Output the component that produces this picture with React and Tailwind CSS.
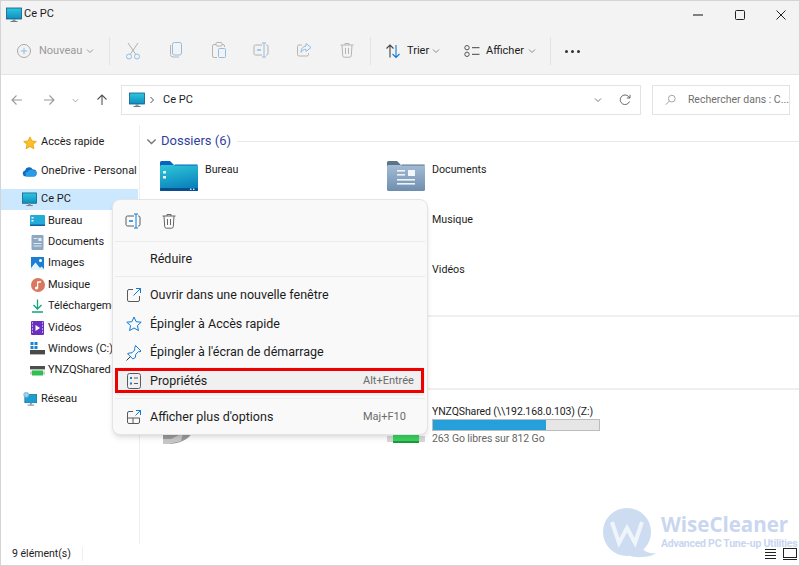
import React from 'react';

const BLUE = '#0f7bd6';
const GREY = '#5a5a5a';

// Icons
const PcIcon = ({ size = 16 }) => (
  <svg width={size} height={size} viewBox="0 0 16 16">
    <defs>
      <linearGradient id="pcg" x1="0" y1="0" x2="0" y2="1">
        <stop offset="0" stopColor="#2fc6e0" />
        <stop offset="1" stopColor="#0c8fc0" />
      </linearGradient>
    </defs>
    <rect x="0.5" y="1" width="15" height="11" fill="url(#pcg)" stroke="#0f5a86" strokeWidth="0.8" />
    <rect x="6.5" y="12" width="3" height="2" fill="#8a98a4" />
    <rect x="4.5" y="14" width="7" height="1" fill="#6d7b87" />
  </svg>
);

const Plus = () => (
  <svg width="16" height="16" viewBox="0 0 16 16" fill="none" stroke="#a9a9a9" strokeWidth="1">
    <circle cx="8" cy="8" r="6.5" />
    <path d="M8 4.8v6.4M4.8 8h6.4" stroke="#8fbde6" />
  </svg>
);

const Chevron = ({ color = '#8a8a8a', size = 8 }) => (
  <svg width={size} height={size} viewBox="0 0 8 8" fill="none" stroke={color} strokeWidth="1">
    <path d="M1 2.5l3 3 3-3" />
  </svg>
);

const Cut = () => (
  <svg width="16" height="18" viewBox="0 0 16 18" fill="none" strokeWidth="1">
    <path d="M3 1l7.5 11M13 1L5.5 12" stroke="#b0b0b0" />
    <circle cx="4" cy="14.5" r="2.5" stroke="#8fbde6" />
    <circle cx="12" cy="14.5" r="2.5" stroke="#8fbde6" />
  </svg>
);

const Copy = () => (
  <svg width="14" height="16" viewBox="0 0 14 16" fill="none" strokeWidth="1">
    <path d="M1.5 3v9.5a2.5 2.5 0 0 0 2.5 2.5h6" stroke="#b5b5b5" />
    <rect x="3.5" y="0.5" width="9" height="12.5" rx="2" stroke="#8fbde6" />
  </svg>
);

const Paste = () => (
  <svg width="14" height="16" viewBox="0 0 14 16" fill="none" strokeWidth="1">
    <path d="M4 2.5H2a1.5 1.5 0 0 0-1.5 1.5v10A1.5 1.5 0 0 0 2 15.5h3M10 2.5h1A1.5 1.5 0 0 1 12.5 4v1" stroke="#b5b5b5" />
    <rect x="4" y="0.5" width="6" height="3.5" rx="1" stroke="#b5b5b5" />
    <rect x="6.5" y="6.5" width="7" height="9" rx="1" stroke="#8fbde6" />
  </svg>
);

const Rename = ({ dark }) => (
  <svg width="16" height="16" viewBox="0 0 16 16" fill="none" strokeWidth="1">
    <path d="M9 3H2.5A1.5 1.5 0 0 0 1 4.5v7A1.5 1.5 0 0 0 2.5 13H9" stroke={dark ? GREY : '#b0b0b0'} />
    <path d="M13 3h.5A1.5 1.5 0 0 1 15 4.5v7a1.5 1.5 0 0 1-1.5 1.5H13" stroke={dark ? GREY : '#b0b0b0'} />
    <path d="M11 1v14M9 1h4M9 15h4" stroke={dark ? BLUE : '#8fbde6'} />
    <path d="M4 8h4" stroke={dark ? BLUE : '#8fbde6'} strokeWidth="1.5" />
  </svg>
);

const Share = () => (
  <svg width="16" height="16" viewBox="0 0 16 16" fill="none" strokeWidth="1">
    <path d="M6 3H3a1.5 1.5 0 0 0-1.5 1.5v8A1.5 1.5 0 0 0 3 14h8a1.5 1.5 0 0 0 1.5-1.5V11" stroke="#b5b5b5" />
    <path d="M10 1.5L15 5.5l-5 4V7.3C7.5 7.3 6 8.5 5 10.5c0-4 2-6.3 5-6.5z" stroke="#8fbde6" />
  </svg>
);

const Trash = ({ color = '#b5b5b5' }) => (
  <svg width="14" height="16" viewBox="0 0 14 16" fill="none" stroke={color} strokeWidth="1">
    <path d="M0.5 3h13M5 3V1.5h4V3M2 3l0.7 10.5A1.7 1.7 0 0 0 4.4 15.2h5.2a1.7 1.7 0 0 0 1.7-1.7L12 3" />
    <path d="M5.5 6v6M8.5 6v6" />
  </svg>
);

const Sort = () => (
  <svg width="16" height="16" viewBox="0 0 16 16" fill="none" strokeWidth="1.1">
    <path d="M5 14.5V2M1.5 5.5L5 2l3.5 3.5" stroke="#444" />
    <path d="M11 2v12.5M7.5 11l3.5 3.5 3.5-3.5" stroke={BLUE} />
  </svg>
);

const ViewIcon = () => (
  <svg width="16" height="12" viewBox="0 0 16 12" fill="none" strokeWidth="1">
    <circle cx="3" cy="2.7" r="2.2" stroke="#555" />
    <circle cx="3" cy="9.3" r="2.2" stroke="#555" />
    <path d="M8 2.7h7.5M8 9.3h7.5" stroke="#444" />
  </svg>
);

const Arrow = ({ dir = 'left', color = '#9a9a9a' }) => {
  const r = { left: 0, right: 180, up: 90 }[dir];
  return (
    <svg width="12" height="12" viewBox="0 0 12 12" fill="none" stroke={color} strokeWidth="1.1" style={{ transform: `rotate(${r}deg)` }}>
      <path d="M11 6H1M5.5 1.5L1 6l4.5 4.5" />
    </svg>
  );
};

const Refresh = () => (
  <svg width="12" height="12" viewBox="0 0 12 12" fill="none" stroke="#666" strokeWidth="1">
    <path d="M10.5 7.5A4.8 4.8 0 1 1 9.8 2.8L11 4M11 0.8V4H7.8" />
  </svg>
);

const Search = () => (
  <svg width="12" height="12" viewBox="0 0 12 12" fill="none" stroke="#9a9a9a" strokeWidth="1">
    <circle cx="7.5" cy="4.5" r="3.7" />
    <path d="M4.8 7.2L0.8 11.2" />
  </svg>
);

const Star = ({ fill = '#fbc02d', stroke = '#e8a400', size = 15, w = 1 }) => (
  <svg width={size} height={size} viewBox="0 0 16 16" fill={fill} stroke={stroke} strokeWidth={w} strokeLinejoin="round">
    <path d="M8 1l2.1 4.7 5.1 0.5-3.8 3.4 1.1 5L8 12l-4.5 2.6 1.1-5L0.8 6.2l5.1-0.5z" />
  </svg>
);

const Cloud = () => (
  <svg width="15" height="11" viewBox="0 0 15 11">
    <path d="M3.5 10.5A3 3 0 0 1 3 4.6 4.2 4.2 0 0 1 10.8 3.5 3.5 3.5 0 0 1 11.5 10.5z" fill="#0f6cbd" />
    <path d="M6 10.5a2.5 2.5 0 0 1 0-5 3.5 3.5 0 0 1 5.5-1A3 3 0 0 1 11.8 10.5z" fill="#2b9be8" />
  </svg>
);

const DesktopSmall = () => (
  <svg width="15" height="13" viewBox="0 0 15 13">
    <rect x="0" y="1" width="15" height="11" rx="1" fill="#22abd8" />
    <rect x="0" y="10.5" width="15" height="1.5" fill="#0c5fa8" />
    <rect x="1.5" y="3" width="2" height="1.5" fill="#fff" />
    <rect x="1.5" y="6" width="2" height="1.5" fill="#fff" />
  </svg>
);

const DocSmall = () => (
  <svg width="13" height="15" viewBox="0 0 13 15">
    <rect x="0.5" y="0" width="12" height="15" rx="1" fill="#8ea8c3" />
    <rect x="2.5" y="3" width="4" height="1" fill="#dfe8f1" />
    <rect x="7.5" y="3" width="3" height="3" fill="#e9eff5" />
    <rect x="2.5" y="8" width="8" height="1" fill="#dfe8f1" />
    <rect x="2.5" y="10.5" width="8" height="1" fill="#dfe8f1" />
  </svg>
);

const ImgSmall = () => (
  <svg width="13" height="13" viewBox="0 0 13 13">
    <rect width="13" height="13" fill="#1a7fd4" />
    <circle cx="9.5" cy="3.5" r="1.5" fill="#fff" />
    <path d="M0 11L4.5 5.5 9 11l1.5-1.5 2.5 2.5v1H0z" fill="#e6f2fb" />
  </svg>
);

const MusicSmall = () => (
  <svg width="14" height="14" viewBox="0 0 14 14">
    <circle cx="7" cy="7" r="7" fill="#d9775f" />
    <path d="M6 10V3.5L10 3v1.5L7.2 5v5.2" fill="#fff" />
    <circle cx="5.5" cy="10" r="1.6" fill="#fff" />
  </svg>
);

const DownSmall = () => (
  <svg width="13" height="14" viewBox="0 0 13 14" fill="none" stroke="#12a37e" strokeWidth="1.3">
    <path d="M6.5 0.5v9M2.5 6l4 4 4-4M1 13h11" />
  </svg>
);

const VideoSmall = () => (
  <svg width="13" height="14" viewBox="0 0 13 14">
    <rect width="13" height="14" rx="1" fill="#6b2fbf" />
    <path d="M4.5 4v6l4.5-3z" fill="#fff" />
    <path d="M1 2h1M1 5h1M1 8h1M1 11h1M11 2h1M11 5h1M11 8h1M11 11h1" stroke="#d6c2f2" strokeWidth="1.3" />
  </svg>
);

const WinDrive = () => (
  <svg width="15" height="14" viewBox="0 0 15 14">
    <rect x="0.5" y="0" width="3" height="3" fill="#1685d8" />
    <rect x="4.5" y="0" width="3" height="3" fill="#1685d8" />
    <rect x="0.5" y="4" width="3" height="3" fill="#1685d8" />
    <rect x="4.5" y="4" width="3" height="3" fill="#1685d8" />
    <rect x="0" y="8" width="15" height="4" fill="#4a4a4a" />
    <rect x="0" y="12" width="15" height="1" fill="#b5b5b5" />
  </svg>
);

const NetDrive = () => (
  <svg width="15" height="10" viewBox="0 0 15 10">
    <rect x="0" y="0" width="15" height="3.5" fill="#4d4d4d" />
    <rect x="0" y="3.5" width="15" height="1" fill="#d8d8d8" />
    <rect x="2" y="4.5" width="11" height="5" fill="#2fc050" />
    <rect x="0" y="5.5" width="2" height="3" fill="#c8c8c8" />
    <rect x="13" y="5.5" width="2" height="3" fill="#c8c8c8" />
  </svg>
);

const Network = () => (
  <svg width="16" height="16" viewBox="0 0 16 16">
    <rect x="3" y="3" width="13" height="9" fill="#1b9fd0" stroke="#125f8a" strokeWidth="0.6" />
    <circle cx="4.5" cy="3.5" r="3" fill="#7db7dc" />
    <path d="M2 3.5h5M4.5 1v5" stroke="#d8ecf8" strokeWidth="0.6" />
    <rect x="8.5" y="12" width="2" height="2" fill="#8a98a4" />
    <rect x="6" y="14" width="7" height="1" fill="#6d7b87" />
  </svg>
);

const DesktopFolder = () => (
  <svg width="38" height="30" viewBox="0 0 38 30">
    <defs>
      <linearGradient id="dfg" x1="0" y1="0" x2="0.3" y2="1">
        <stop offset="0" stopColor="#2fc8d8" />
        <stop offset="1" stopColor="#0b83bd" />
      </linearGradient>
    </defs>
    <path d="M0 6V1.5A1.5 1.5 0 0 1 1.5 0H10l4 4v3H0z" fill="#0b63c1" />
    <rect x="0" y="4" width="38" height="26" rx="1.5" fill="url(#dfg)" />
    <path d="M0 4.5h14l1-1h22a1 1 0 0 1 1 1H0z" fill="#0b63c1" />
    <rect x="0" y="27" width="38" height="3" rx="1" fill="#084f8f" />
    <rect x="3" y="10" width="3" height="2.5" fill="#e8f8fc" />
    <rect x="3" y="15" width="3" height="2.5" fill="#e8f8fc" />
    <rect x="30" y="27.5" width="1.5" height="1.5" fill="#cfe8f5" />
    <rect x="33" y="27.5" width="1.5" height="1.5" fill="#cfe8f5" />
  </svg>
);

const DocFolder = () => (
  <svg width="38" height="30" viewBox="0 0 38 30">
    <defs>
      <linearGradient id="dcg" x1="0" y1="0" x2="0" y2="1">
        <stop offset="0" stopColor="#a3bcd6" />
        <stop offset="1" stopColor="#6f8eae" />
      </linearGradient>
    </defs>
    <path d="M0 6V1.5A1.5 1.5 0 0 1 1.5 0H10l4 4v3H0z" fill="#5d7488" />
    <rect x="0" y="4" width="38" height="26" rx="1.5" fill="url(#dcg)" />
    <path d="M0 4.5h14l1-1h22a1 1 0 0 1 1 1H0z" fill="#5d7488" />
    <rect x="10" y="9" width="8" height="1.6" fill="#eef3f8" />
    <rect x="10" y="13" width="8" height="1.6" fill="#eef3f8" />
    <rect x="21" y="9" width="7" height="6" fill="#f4f7fa" />
    <rect x="10" y="18" width="18" height="1.6" fill="#eef3f8" />
    <rect x="10" y="22" width="18" height="1.6" fill="#eef3f8" />
  </svg>
);

const OpenNew = () => (
  <svg width="16" height="16" viewBox="0 0 16 16" fill="none" strokeWidth="1">
    <path d="M7 2.5H3A1.5 1.5 0 0 0 1.5 4v9A1.5 1.5 0 0 0 3 14.5h9a1.5 1.5 0 0 0 1.5-1.5V9" stroke={GREY} />
    <path d="M10 1.5h4.5V6M14.5 1.5L7.5 8.5" stroke={BLUE} />
  </svg>
);

const Pin = () => (
  <svg width="16" height="16" viewBox="0 0 16 16" fill="none" strokeWidth="1" stroke={BLUE} strokeLinejoin="round">
    <path d="M9.5 1L15 6.5l-1 0.8-1.5-0.2-2.8 2.8-0.3 3L6.8 14.5 1.5 9.2 3 8.6l3-0.3 2.8-2.8L8.6 4z" transform="translate(0 -0.5)" />
    <path d="M4.5 11.5L0.5 15.5" stroke="#333" />
  </svg>
);

const Props = () => (
  <svg width="14" height="16" viewBox="0 0 14 16" fill="none" strokeWidth="1">
    <rect x="0.5" y="0.5" width="13" height="15" rx="2" stroke={GREY} />
    <rect x="3" y="4" width="2" height="2" fill={BLUE} />
    <rect x="3" y="9.5" width="2" height="2" fill={BLUE} />
    <path d="M7 5h4M7 10.5h4" stroke={GREY} />
  </svg>
);

const MoreOptions = () => (
  <svg width="16" height="16" viewBox="0 0 16 16" fill="none" strokeWidth="1">
    <path d="M7 2.5H3A1.5 1.5 0 0 0 1.5 4v9A1.5 1.5 0 0 0 3 14.5h9a1.5 1.5 0 0 0 1.5-1.5V9H1.5M7 9v5.5" stroke={GREY} />
    <path d="M10 1.5h4.5V6M14.5 1.5L9.5 6.5" stroke={BLUE} />
  </svg>
);

const Sep = () => <div className="w-px h-[28px] bg-[#e3e3e3]" />;

const nav = [
  { label: 'Accès rapide', icon: <Star size={14} />, gap: true },
  { label: 'OneDrive - Personal', icon: <Cloud />, gap: true },
  { label: 'Ce PC', icon: <PcIcon size={15} />, gap: true, selected: true },
  { label: 'Bureau', icon: <DesktopSmall />, sub: true },
  { label: 'Documents', icon: <DocSmall />, sub: true },
  { label: 'Images', icon: <ImgSmall />, sub: true },
  { label: 'Musique', icon: <MusicSmall />, sub: true },
  { label: 'Téléchargements', icon: <DownSmall />, sub: true },
  { label: 'Vidéos', icon: <VideoSmall />, sub: true },
  { label: 'Windows (C:)', icon: <WinDrive />, sub: true },
  { label: 'YNZQShared', icon: <NetDrive />, sub: true },
  { label: 'Réseau', icon: <Network />, gap: true },
];

const folders = [
  { name: 'Bureau', icon: <DesktopFolder /> },
  { name: 'Documents', icon: <DocFolder /> },
  { name: 'Images', icon: <DocFolder /> },
  { name: 'Musique', icon: <DocFolder /> },
  { name: 'Téléchargements', icon: <DocFolder /> },
  { name: 'Vidéos', icon: <DocFolder /> },
];

const MenuRow = ({ icon, label, shortcut, active }) => (
  <div className={`relative flex items-center h-[28.67px] mx-[2px] rounded ${active ? 'bg-[#f0f0f0]' : ''}`}>
    <div className="w-[35px] flex justify-center shrink-0 pl-[2px]">{icon}</div>
    <span className="text-[12.5px] text-[#1c1c1c]">{label}</span>
    {shortcut && <span className="ml-auto w-[62px] text-[11px] text-[#6b6b6b]">{shortcut}</span>}
    {active && <div className="absolute left-0 right-[1px] top-[1px] h-[25px] border-[3px] border-[#ee0000]" />}
  </div>
);

export default function App() {
  return (
    <div className="relative w-[800px] h-[566px] overflow-hidden flex flex-col bg-white border border-[#d4d4d4] font-['Roboto',sans-serif] text-[#1c1c1c]">
      {/* barre de titre */}
      <div className="h-[28px] bg-[#f3f3f3] flex items-center shrink-0">
        <div className="ml-[5px]"><PcIcon /></div>
        <span className="ml-[2px] text-[11px] -mt-[1px]">Ce PC</span>
        <div className="ml-auto flex items-center">
          <svg width="10" height="10" viewBox="0 0 10 10" className="mr-[32px]"><path d="M0 5h10" stroke="#222" strokeWidth="1.1" /></svg>
          <svg width="10" height="10" viewBox="0 0 10 10" className="mr-[31px]"><rect x="0.5" y="0.5" width="9" height="9" rx="1" fill="none" stroke="#222" /></svg>
          <svg width="10" height="10" viewBox="0 0 10 10" className="mr-[13px]"><path d="M0.5 0.5l9 9M9.5 0.5l-9 9" stroke="#222" /></svg>
        </div>
      </div>

      {/* barre d'outils */}
      <div className="h-[46px] bg-[#f3f3f3] border-b border-[#e5e5e5] flex items-center shrink-0 pb-[1px]">
        <div className="w-[108px] flex items-center pl-[15px] shrink-0">
          <Plus />
          <span className="ml-[7px] text-[11px] text-[#9a9a9a] mt-[1px]">Nouveau</span>
          <span className="ml-[4px]"><Chevron color="#9a9a9a" /></span>
        </div>
        <Sep />
        <div className="w-[260px] grid grid-cols-6 pl-[2px] pr-[2px] shrink-0">
          <div className="flex justify-center"><Cut /></div>
          <div className="flex justify-center"><Copy /></div>
          <div className="flex justify-center"><Paste /></div>
          <div className="flex justify-center"><Rename /></div>
          <div className="flex justify-center"><Share /></div>
          <div className="flex justify-center"><Trash /></div>
        </div>
        <Sep />
        <div className="w-[179px] flex items-center pl-[14px] shrink-0">
          <Sort />
          <span className="ml-[6px] text-[11px] w-[21px] mt-[1px]">Trier</span>
          <span className="ml-[4px]"><Chevron /></span>
          <span className="ml-[24px]"><ViewIcon /></span>
          <span className="ml-[6px] text-[11px] w-[38px] mt-[1px]">Afficher</span>
          <span className="ml-[4px]"><Chevron /></span>
        </div>
        <Sep />
        <div className="ml-[14px] flex gap-[3px]">
          <div className="w-[3px] h-[3px] rounded-full bg-[#333]" />
          <div className="w-[3px] h-[3px] rounded-full bg-[#333]" />
          <div className="w-[3px] h-[3px] rounded-full bg-[#333]" />
        </div>
      </div>

      {/* barre d'adresse */}
      <div className="h-[50px] flex items-center shrink-0">
        <div className="w-[120px] flex items-center shrink-0 pl-[10px]">
          <Arrow />
          <span className="ml-[20px]"><Arrow dir="right" /></span>
          <span className="ml-[17px]"><Chevron color="#9a9a9a" size={7} /></span>
          <span className="ml-[17px]"><Arrow dir="up" color="#555" /></span>
        </div>
        <div className="w-[520px] h-[30px] border border-[#e3e3e3] flex items-center pl-[7px] pr-[9px] shrink-0">
          <PcIcon />
          <svg width="6" height="8" viewBox="0 0 6 8" className="ml-[4px]" fill="none" stroke="#555"><path d="M1.5 1l3 3-3 3" /></svg>
          <span className="ml-[8px] text-[11px]">Ce PC</span>
          <span className="ml-auto"><Chevron color="#777" /></span>
          <span className="ml-[17px]"><Refresh /></span>
        </div>
        <div className="ml-[11px] w-[138px] h-[30px] border border-[#e3e3e3] flex items-center pl-[12px] shrink-0">
          <Search />
          <span className="ml-[12px] text-[10.5px] text-[#6f6f6f] whitespace-nowrap">Rechercher dans : C...</span>
        </div>
      </div>

      <div className="flex flex-1 min-h-0">
        {/* volet de navigation */}
        <div className="w-[139px] shrink-0 border-r border-[#eeeeee] pt-[7px] overflow-hidden">
          {nav.map((n) => (
            <div
              key={n.label}
              className={`flex items-center h-[21.4px] whitespace-nowrap mr-[1px] ${n.sub ? 'pl-[29px]' : 'pl-[21px]'} ${n.gap && n.label !== 'Accès rapide' ? 'mt-[7px]' : ''} ${n.selected ? 'bg-[#cce8ff]' : ''}`}
            >
              <span className="w-[15px] flex justify-center shrink-0">{n.icon}</span>
              <span className={`text-[11px] ${n.sub ? 'ml-[3px]' : 'ml-[4px]'}`}>{n.label}</span>
            </div>
          ))}
        </div>

        {/* contenu */}
        <div className="flex-1 min-w-0">
          <div className="flex items-center h-[18px] mt-[7px] pl-[6px]">
            <Chevron color="#777" size={11} />
            <span className="ml-[4px] text-[13px] text-[#2f3f9e]">Dossiers (6)</span>
            <div className="ml-[6px] flex-1 h-px bg-[#e8e8e8]" />
          </div>
          <div className="mt-[5px] grid grid-cols-[227px_1fr] pl-[20px]">
            {folders.map((f) => (
              <div key={f.name} className="h-[50px] flex items-start">
                <div className="mt-[6px] shrink-0">{f.icon}</div>
                <span className="ml-[7px] text-[10.7px] leading-[16px] mt-[7px]">{f.name}</span>
              </div>
            ))}
          </div>
          <div className="mt-[10px] h-[2px] bg-[#efefef]" />
          <div className="mt-[71px] h-[2px] bg-[#efefef]" />
          <div className="grid grid-cols-[227px_1fr] pl-[20px] mt-[14px]">
            <div className="flex items-start">
              <svg width="38" height="41" viewBox="0 0 38 41" className="shrink-0 -mt-[1px]">
                <path d="M3 18h30v10c-3 8-14 13-24 13H3z" fill="#9a9a9a" />
                <path d="M3 36h8l12-6-2 8-12 3H3z" fill="#c8c8c8" />
              </svg>
              <span className="ml-[7px] mt-[4px] text-[10.7px] leading-[16px]">Windows (C:)</span>
            </div>
            <div className="flex items-start">
              <svg width="38" height="41" viewBox="0 0 38 41" className="shrink-0 -mt-[1px]">
                <rect x="0" y="33" width="38" height="6" fill="#d8d8d8" />
                <rect x="6" y="32" width="26" height="8" fill="#39d35f" />
                <rect x="6" y="38" width="26" height="2" fill="#1f9a3e" />
              </svg>
              <div className="ml-[7px] w-[168px]">
                <div className="text-[10.5px] tracking-[-0.1px] leading-[16px] whitespace-nowrap">YNZQShared (\\192.168.0.103) (Z:)</div>
                <div className="h-[12px] border border-[#bcbcbc] bg-[#e6e6e6] mt-[-1px]">
                  <div className="h-full w-[68%] bg-[#26a0da]" />
                </div>
                <div className="text-[10.5px] tracking-[-0.1px] leading-[16px] text-[#666666] whitespace-nowrap">263 Go libres sur 812 Go</div>
              </div>
            </div>
          </div>
        </div>
      </div>

      {/* filigrane */}
      <div className="absolute left-[599px] top-[507px] flex items-center pointer-events-none">
        <div className="relative w-[58px] h-[50px] shrink-0">
          <svg width="58" height="50" viewBox="0 0 58 50">
            <circle cx="27" cy="24" r="24" fill="#cddcf1" />
            <path d="M40 38c4 6 10 8 16 7-4 4-20 6-28 2z" fill="#cddcf1" />
            <path d="M12 14l7 21 8-15 8 15 7-21" fill="none" stroke="#eff5fb" strokeWidth="4" />
          </svg>
        </div>
        <div className="ml-[3px] leading-none -mt-[3px]">
          <div className="text-[20.5px] font-bold text-[#c9d6ef] font-['Open_Sans',sans-serif] leading-[25px] whitespace-nowrap">WiseCleaner</div>
          <div className="text-[10.5px] font-bold text-[#c9d6ef] leading-[14px] whitespace-nowrap tracking-[-0.25px]">Advanced PC Tune-up Utilities</div>
        </div>
      </div>

      {/* barre d'état */}
      <div className="relative h-[21px] flex items-center shrink-0 pl-[11px] pb-[1px]">
        <span className="text-[10.5px]">9 élément(s)</span>
        <div className="ml-[11px] w-px h-[14px] bg-[#eeeeee]" />
        <div className="ml-auto flex items-center gap-[6px] pr-[2px]">
          <svg width="14" height="12" viewBox="0 0 14 12" stroke="#222" className="bg-white"><path d="M2 1.5h11M2 4.5h11M2 7.5h11M2 10.5h11" /></svg>
          <svg width="14" height="12" viewBox="0 0 14 12" fill="none" stroke="#222" className="bg-white"><rect x="0.5" y="0.5" width="13" height="9" /><path d="M0 11.5h14" /></svg>
        </div>
      </div>

      {/* menu contextuel */}
      <div className="absolute left-[111px] top-[198px] w-[316px] h-[236px] bg-[#f9f9f9] border border-[#e4e4e4] rounded-lg shadow-md flex flex-col">
        <div className="h-[41px] flex items-center shrink-0">
          <div className="w-[40px] flex justify-center"><Rename dark /></div>
          <div className="w-[32px] flex justify-center"><Trash color="#666" /></div>
        </div>
        <div className="h-px mx-[2px] bg-[#ebebeb] shrink-0" />
        <div className="h-[34px] flex items-center pl-[37px] text-[12.5px] shrink-0">Réduire</div>
        <div className="h-px mx-[2px] bg-[#ebebeb] shrink-0" />
        <div className="pt-[4px] h-[121px] shrink-0">
          <MenuRow icon={<OpenNew />} label="Ouvrir dans une nouvelle fenêtre" />
          <MenuRow icon={<Star fill="none" stroke={BLUE} size={16} />} label="Épingler à Accès rapide" />
          <MenuRow icon={<Pin />} label="Épingler à l'écran de démarrage" />
          <MenuRow icon={<Props />} label="Propriétés" shortcut="Alt+Entrée" active />
        </div>
        <div className="h-px mx-[2px] bg-[#ebebeb] shrink-0" />
        <div className="flex-1">
          <div className="pt-[4px]">
            <MenuRow icon={<MoreOptions />} label="Afficher plus d'options" shortcut="Maj+F10" />
          </div>
        </div>
      </div>
    </div>
  );
}
